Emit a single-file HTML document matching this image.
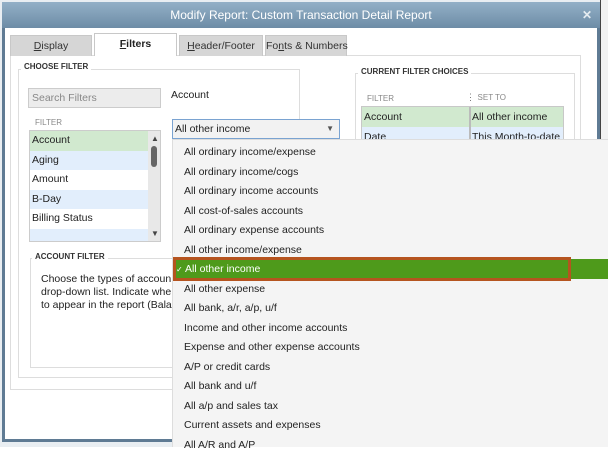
<!DOCTYPE html>
<html><head><style>
*{margin:0;padding:0;box-sizing:border-box;white-space:nowrap}
body{width:608px;height:447px;overflow:hidden;background:#fff;font-family:"Liberation Sans",sans-serif;font-size:10.5px;color:#222;position:relative}
.a{position:absolute}
.win{left:2px;top:2px;width:598px;height:440px;border:3px solid #5f7b94;border-top:none;background:#fff}
.title{left:2px;top:2px;width:598px;height:26px;background:linear-gradient(#93b0c7,#6d8ca6);color:#fff;font-size:12px;text-align:center;line-height:26px}
.tab{top:35px;height:21px;background:#d6d6d6;border:1px solid #c8c8c8;border-bottom:none;text-align:center;line-height:20px;font-size:10.5px;color:#333}
.grp{border:1px solid #ddd}
.lbl{font-size:8px;font-weight:bold;color:#333;background:#fff;padding:0 3px}
.row{left:0;width:118px;height:19.6px;line-height:19.6px;padding-left:2px;font-size:10.5px}
.it{left:11px;font-size:10.5px;color:#222}
</style></head><body>
<div class="a" style="left:0;top:0;width:608px;height:447px;background:#e9eef2"></div>
<div class="a win"></div>
<div class="a title">Modify Report: Custom Transaction Detail Report<span class="a" style="right:8px;top:0;font-weight:bold;font-size:12px;color:#e4ebf0">✕</span></div>
<div class="a" style="left:600px;top:0;width:8px;height:447px;background:#f2f2f2;border-left:1px solid #444"></div>

<div class="a grp" style="left:10px;top:55px;width:571px;height:335px"></div>
<div class="a tab" style="left:10px;width:82px"><u>D</u>isplay</div>
<div class="a tab" style="left:94px;width:83px;top:33px;height:23px;background:#fff;font-weight:bold;color:#222"><u>F</u>ilters</div>
<div class="a tab" style="left:179px;width:84px"><u>H</u>eader/Footer</div>
<div class="a tab" style="left:265px;width:82px">Fo<u>n</u>ts &amp; Numbers</div>

<div class="a grp" style="left:18px;top:69px;width:282px;height:309px"></div>
<div class="a lbl" style="left:21px;top:62px">CHOOSE FILTER</div>
<div class="a" style="left:28px;top:88px;width:133px;height:20px;background:#ececec;border:1px solid #ccc;color:#888;line-height:18px;padding-left:3px">Search Filters</div>
<div class="a" style="left:171px;top:89px">Account</div>
<div class="a" style="left:35px;top:118px;font-size:8px;color:#888">FILTER</div>
<div class="a" style="left:29px;top:130px;width:132px;height:112px;border:1px solid #ccc;overflow:hidden;background:#fff">
<div class="a row" style="top:0;background:#d1e9cf">Account</div>
<div class="a row" style="top:19.6px;background:#e2eefc">Aging</div>
<div class="a row" style="top:39.2px">Amount</div>
<div class="a row" style="top:58.8px;background:#e2eefc">B-Day</div>
<div class="a row" style="top:78.4px">Billing Status</div>
<div class="a row" style="top:98px;background:#e2eefc"></div>
<div class="a" style="left:118px;top:0;width:13px;height:110px;background:#e8e8e8"></div>
<div class="a" style="left:121px;top:3px;font-size:8px;color:#444">▲</div>
<div class="a" style="left:121px;top:15px;width:6px;height:21px;background:#666;border-radius:3px"></div>
<div class="a" style="left:121px;top:98px;font-size:8px;color:#444">▼</div>
</div>
<div class="a grp" style="left:30px;top:258px;width:270px;height:110px"></div>
<div class="a lbl" style="left:32px;top:252px">ACCOUNT FILTER</div>
<div class="a" style="left:41px;top:273px;line-height:13px">Choose the types of accoun<br>drop-down list. Indicate whe<br>to appear in the report (Bala</div>

<div class="a grp" style="left:355px;top:73px;width:220px;height:70px"></div>
<div class="a lbl" style="left:358px;top:67px">CURRENT FILTER CHOICES</div>
<div class="a" style="left:367px;top:94px;font-size:8px;color:#888">FILTER</div>
<div class="a" style="left:466px;top:92px;font-size:9px;color:#777">⋮ <span style="font-size:8px;color:#888">SET TO</span></div>
<div class="a" style="left:361px;top:106px;width:203px;height:34px;border:1px solid #c8c8c8;border-bottom:none;overflow:hidden">
<div class="a" style="left:0;top:0;width:201px;height:20px;background:#d1e9cf"></div>
<div class="a" style="left:0;top:20px;width:201px;height:14px;background:#e2eefc"></div>
<div class="a" style="left:107px;top:0;width:2px;height:34px;background:#bbb"></div>
<div class="a" style="left:2px;top:4px">Account</div>
<div class="a" style="left:110px;top:4px">All other income</div>
<div class="a" style="left:2px;top:24px">Date</div>
<div class="a" style="left:110px;top:24px">This Month-to-date</div>
</div>

<div class="a" style="left:172px;top:119px;width:168px;height:20px;background:#f2f2f2;border:1px solid #7aa3d1;line-height:18px;padding-left:2px">All other income<span class="a" style="right:5px;top:0;font-size:8px;color:#555">▼</span></div>

<div class="a" style="left:172px;top:139px;width:436px;height:308px;background:#f4f4f4;border-left:1px solid #ddd;border-top:1px solid #ddd">
<div class="a it" style="top:6px">All ordinary income/expense</div>
<div class="a it" style="top:25.5px">All ordinary income/cogs</div>
<div class="a it" style="top:45px">All ordinary income accounts</div>
<div class="a it" style="top:64.5px">All cost-of-sales accounts</div>
<div class="a it" style="top:84px">All ordinary expense accounts</div>
<div class="a it" style="top:103.5px">All other income/expense</div>
<div class="a" style="left:2px;top:119px;width:434px;height:20px;background:#4e9a1b"></div>
<div class="a" style="left:0;top:117px;width:398px;height:24px;border:3px solid #b5541f"></div>
<div class="a it" style="left:3px;top:123px;color:#fff"><span style="font-size:8px">✓</span> All other income</div>
<div class="a it" style="top:142.5px">All other expense</div>
<div class="a it" style="top:162px">All bank, a/r, a/p, u/f</div>
<div class="a it" style="top:181.5px">Income and other income accounts</div>
<div class="a it" style="top:201px">Expense and other expense accounts</div>
<div class="a it" style="top:220.5px">A/P or credit cards</div>
<div class="a it" style="top:240px">All bank and u/f</div>
<div class="a it" style="top:259.5px">All a/p and sales tax</div>
<div class="a it" style="top:279px">Current assets and expenses</div>
<div class="a it" style="top:298.5px">All A/R and A/P</div>
</div>
</body></html>
